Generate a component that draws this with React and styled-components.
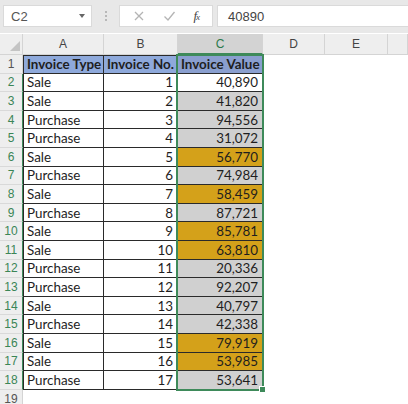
import { Fragment } from 'react';
import styled, { createGlobalStyle } from 'styled-components';

const GlobalStyle = createGlobalStyle`
  html, body {
    margin: 0;
    padding: 0;
    background: #ffffff;
    overflow: hidden;
  }
  body {
    font-family: Lato, "Open Sans", "Liberation Sans", sans-serif;
  }
`;

const ROW_H = 18.6;

const rows = [
  ['Sale', 1, '40,890'],
  ['Sale', 2, '41,820'],
  ['Purchase', 3, '94,556'],
  ['Purchase', 4, '31,072'],
  ['Sale', 5, '56,770', true],
  ['Purchase', 6, '74,984'],
  ['Sale', 7, '58,459', true],
  ['Purchase', 8, '87,721'],
  ['Sale', 9, '85,781', true],
  ['Sale', 10, '63,810', true],
  ['Purchase', 11, '20,336'],
  ['Purchase', 12, '92,207'],
  ['Sale', 13, '40,797'],
  ['Purchase', 14, '42,338'],
  ['Sale', 15, '79,919', true],
  ['Sale', 16, '53,985', true],
  ['Purchase', 17, '53,641'],
];

const Page = styled.div`
  width: 408px;
  height: 404px;
  display: flex;
  flex-direction: column;
  overflow: hidden;
`;

// formula bar ---------------------------------------------------------

const FormulaBar = styled.div`
  height: 33px;
  flex: none;
  display: flex;
  align-items: flex-start;
  padding-top: 5px;
  box-sizing: border-box;
  background: #e8e8e8;
`;

const NameBox = styled.div`
  margin-left: 3px;
  width: 89px;
  height: 22px;
  box-sizing: border-box;
  background: #fff;
  border: 1px solid #dadada;
  display: flex;
  align-items: center;
  justify-content: space-between;
  padding: 0 6px 0 7px;
  font-family: "Liberation Sans", sans-serif;
  font-size: 13px;
  color: #555;
`;

const Caret = styled.span`
  width: 0;
  height: 0;
  border-left: 3.5px solid transparent;
  border-right: 3.5px solid transparent;
  border-top: 4px solid #666;
`;

const Grip = styled.div`
  width: 27px;
  height: 22px;
  display: flex;
  flex-direction: column;
  align-items: center;
  justify-content: center;
  gap: 2px;

  span {
    width: 2px;
    height: 2px;
    background: #b8b8b8;
  }
`;

const ButtonBox = styled.div`
  width: 94px;
  height: 22px;
  box-sizing: border-box;
  background: #fff;
  border: 1px solid #dadada;
  display: flex;
  align-items: center;
  justify-content: space-around;
  padding: 0 4px;
`;

const FxLabel = styled.span`
  font-family: "Liberation Serif", serif;
  font-style: italic;
  font-size: 13px;
  color: #444;
  letter-spacing: -1px;

  sub {
    font-size: 9px;
    vertical-align: baseline;
  }
`;

const FormulaInput = styled.div`
  flex: 1;
  margin-left: 4px;
  height: 22px;
  box-sizing: border-box;
  background: #fff;
  border: 1px solid #dadada;
  border-right: none;
  display: flex;
  align-items: center;
  padding-left: 10px;
  font-family: "Liberation Sans", sans-serif;
  font-size: 13px;
  color: #444;
`;

// grid ---------------------------------------------------------------

const Sheet = styled.div`
  position: relative;
  display: grid;
  grid-template-columns: 23px 81px 74px 85px 62px 63px 1fr;
  grid-template-rows: 21px repeat(18, ${ROW_H}px) 20px;
  background: #fff;
  margin-top: 1px;
`;

const Corner = styled.div`
  background: #eeeeee;
  border-right: 1px solid #d4d4d4;
  border-bottom: 1px solid #d4d4d4;
  position: relative;

  &::after {
    content: '';
    position: absolute;
    right: 2px;
    bottom: 3px;
    width: 0;
    height: 0;
    border-left: 10px solid transparent;
    border-bottom: 10px solid #c4c4c4;
  }
`;

const ColHead = styled.div`
  background: ${(p) => (p.$active ? '#d3d3d3' : '#eeeeee')};
  border-right: 1px solid #d4d4d4;
  border-bottom: ${(p) => (p.$active ? '2px solid #3e8a5a' : '1px solid #d4d4d4')};
  color: ${(p) => (p.$active ? '#2c7a4b' : '#444')};
  font-family: "Liberation Sans", sans-serif;
  font-size: 12px;
  display: flex;
  align-items: center;
  justify-content: center;
  box-sizing: border-box;
`;

const RowHead = styled.div`
  background: #eeeeee;
  border-bottom: 1px solid #d9d9d9;
  border-right: ${(p) => (p.$active ? '1px solid #3e8a5a' : '1px solid #d4d4d4')};
  color: ${(p) => (p.$active ? '#3a8556' : '#555')};
  font-family: "Liberation Sans", sans-serif;
  font-size: 12px;
  display: flex;
  align-items: center;
  justify-content: center;
  box-sizing: border-box;
`;

const fills = {
  head: '#8ea9db',
  headSel: '#8a9fcf',
  plain: '#ffffff',
  sel: '#d0d0d0',
  orange: '#d4a11a',
};

const Cell = styled.div`
  background: ${(p) => fills[p.$fill || 'plain']};
  border-right: 1px solid #2a2a2a;
  border-bottom: 1px solid #2a2a2a;
  border-top: ${(p) => (p.$top ? '1px solid #2a2a2a' : 'none')};
  border-left: ${(p) => (p.$first ? '1px solid #2a2a2a' : 'none')};
  box-sizing: border-box;
  display: flex;
  align-items: center;
  justify-content: ${(p) => (p.$right ? 'flex-end' : 'flex-start')};
  padding: ${(p) => (p.$right ? '0 4px 0 0' : '0 0 0 3px')};
  font-size: 13.4px;
  font-weight: ${(p) => (p.$bold ? 700 : 400)};
  color: #1e1e1e;
  white-space: nowrap;
  overflow: hidden;
`;

const Empty = styled.div`
  background: #fff;
`;

// absolutely positioned grid child: takes the C1:C18 area as its box
const Selection = styled.div`
  position: absolute;
  grid-column: 4 / 5;
  grid-row: 2 / 20;
  inset: -1px -1px -1px -2px;
  border: 2px solid #3e8a5a;
  pointer-events: none;
  z-index: 2;

  &::after {
    content: '';
    position: absolute;
    right: -4px;
    bottom: -4px;
    width: 5px;
    height: 5px;
    background: #3e8a5a;
    border: 1px solid #fff;
  }
`;

const EmptyCells = ({ n = 3 }) =>
  Array.from({ length: n }, (_, i) => <Empty key={i} />);

export default function App() {
  return (
    <>
      <GlobalStyle />
      <Page>
        <FormulaBar>
          <NameBox>
            C2
            <Caret />
          </NameBox>
          <Grip>
            <span />
            <span />
            <span />
          </Grip>
          <ButtonBox>
            <svg width="12" height="12" viewBox="0 0 12 12">
              <path d="M2 2 L10 10 M10 2 L2 10" stroke="#b4b4b4" strokeWidth="1.3" />
            </svg>
            <svg width="13" height="12" viewBox="0 0 13 12">
              <path d="M1.5 6.5 L5 10 L11.5 2" stroke="#b4b4b4" strokeWidth="1.3" fill="none" />
            </svg>
            <FxLabel>
              f<sub>x</sub>
            </FxLabel>
          </ButtonBox>
          <FormulaInput>40890</FormulaInput>
        </FormulaBar>

        <Sheet>
          <Corner />
          <ColHead>A</ColHead>
          <ColHead>B</ColHead>
          <ColHead $active>C</ColHead>
          <ColHead>D</ColHead>
          <ColHead>E</ColHead>
          <ColHead />

          <RowHead>1</RowHead>
          <Cell $fill="head" $top $first $bold>
            Invoice Type
          </Cell>
          <Cell $fill="head" $top $bold>
            Invoice No.
          </Cell>
          <Cell $fill="headSel" $top $bold>
            Invoice Value
          </Cell>
          <EmptyCells />

          {rows.map(([type, no, value, flagged], i) => (
            <Fragment key={i}>
              <RowHead $active>{i + 2}</RowHead>
              <Cell $first>{type}</Cell>
              <Cell $right>{no}</Cell>
              <Cell $right $fill={i === 0 ? 'plain' : flagged ? 'orange' : 'sel'}>
                {value}
              </Cell>
              <EmptyCells />
            </Fragment>
          ))}

          <RowHead>19</RowHead>
          <EmptyCells n={6} />

          <Selection />
        </Sheet>
      </Page>
    </>
  );
}
